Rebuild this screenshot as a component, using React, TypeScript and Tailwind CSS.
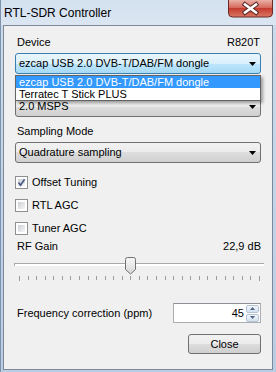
import React from "react";

const comboBg =
  "bg-[linear-gradient(to_bottom,#f2f2f2_0%,#ebebeb_50%,#dddddd_50%,#cfcfcf_100%)] border-[#707070]";
const comboFocusBg =
  "bg-[linear-gradient(to_bottom,#eaf6fd_0%,#d9f0fc_50%,#bee6fd_50%,#a7d9f5_100%)] border-[#3c7fb1]";

const Arrow = () => (
  <svg width="7" height="4" viewBox="0 0 7 4" className="shrink-0">
    <polygon points="0,0 7,0 3.5,4" fill="#000" />
  </svg>
);

const Combo = ({ text, focused }: { text: string; focused?: boolean }) => (
  <div
    className={`h-[21px] flex items-center justify-between border rounded-[3px] pl-[3px] pr-[4px] ${
      focused ? comboFocusBg : comboBg
    }`}
  >
    <span className="leading-[13px]">{text}</span>
    <Arrow />
  </div>
);

const CheckBox = ({ label, checked }: { label: string; checked?: boolean }) => (
  <div className="flex items-center h-[13px] gap-[4px]">
    <div className="relative w-[13px] h-[13px] border border-[#8e8f8f] bg-white p-[2px]">
      <div className="w-full h-full bg-linear-to-br from-[#cbcfd5] to-[#f7f7f7]" />
      {checked && (
        <svg width="11" height="11" viewBox="0 0 11 11" className="absolute left-0 top-0">
          <path d="M2.5 5.5 L4.5 8.2 L8.6 2.2" fill="none" stroke="#4a5c86" strokeWidth="1.7" />
        </svg>
      )}
    </div>
    <span className="leading-[13px]">{label}</span>
  </div>
);

const SpinArrow = ({ up }: { up?: boolean }) => (
  <div className="h-[8px] w-full flex items-center justify-center border border-[#b6c3d3] rounded-[2px] bg-linear-to-b from-[#f3f8fc] to-[#d3e2f0]">
    <svg width="5" height="3" viewBox="0 0 5 3">
      <polygon points={up ? "0,3 5,3 2.5,0" : "0,0 5,0 2.5,3"} fill="#4d6185" />
    </svg>
  </div>
);

export default function App() {
  const ticks = Array.from({ length: 29 });
  return (
    <div className="w-[276px] h-[372px] flex flex-col bg-linear-to-b from-[#cddcec] to-[#b9cde3] border-l border-[#7d93ad] font-['Liberation_Sans',Arial,sans-serif] text-[11px] text-black overflow-hidden">
      {/* title bar */}
      <div className="h-[25px] flex items-start shrink-0 bg-linear-to-b from-[#d3e0ee] to-[#dbe6f2]">
        <span className="mt-[6px] ml-[3px] text-[12px] leading-[14px]">RTL-SDR Controller</span>
        <svg width="45" height="18" viewBox="0 0 45 18" className="ml-auto mr-[3px]">
          <defs>
            <linearGradient id="closeg" x1="0" y1="0" x2="0" y2="1">
              <stop offset="0" stopColor="#eab0a6" />
              <stop offset="0.45" stopColor="#d7695d" />
              <stop offset="0.5" stopColor="#c43c2f" />
              <stop offset="1" stopColor="#dc7a66" />
            </linearGradient>
          </defs>
          <path
            d="M0.5 0 V13 a4 4 0 0 0 4 4 H40.5 a4 4 0 0 0 4 -4 V0"
            fill="url(#closeg)"
            stroke="#6a2a24"
          />
          <path d="M17 4.5 L28 12.5 M28 4.5 L17 12.5" stroke="#5a2a26" strokeWidth="4.6" strokeLinecap="square" />
          <path d="M17 4.5 L28 12.5 M28 4.5 L17 12.5" stroke="#ffffff" strokeWidth="2.6" strokeLinecap="square" />
        </svg>
      </div>

      {/* client area */}
      <div className="ml-[2px] mr-[3px] h-[345px] shrink-0 border border-[#7b8899] bg-[#f0f0f0] px-[11px] pt-[10px] flex flex-col">
        <div className="flex justify-between h-[13px] leading-[13px] pl-[2px] pr-[1px]">
          <span>Device</span>
          <span>R820T</span>
        </div>

        <div className="relative mt-[4px]">
          <Combo text="ezcap USB 2.0 DVB-T/DAB/FM dongle" focused />
          <div className="absolute left-0 right-0 top-[22px] z-10 border border-[#646464] bg-white shadow-[2px_2px_3px_rgba(0,0,0,0.35)]">
            <div className="h-[12px] leading-[12px] pl-[3px] bg-[#3399ff] text-white">
              ezcap USB 2.0 DVB-T/DAB/FM dongle
            </div>
            <div className="h-[12px] leading-[12px] pl-[3px]">Terratec T Stick PLUS</div>
          </div>
        </div>

        <div className="mt-[22px]">
          <Combo text="2.0 MSPS" />
        </div>

        <div className="mt-[8px] h-[13px] leading-[13px] pl-[2px]">Sampling Mode</div>
        <div className="mt-[4px]">
          <Combo text="Quadrature sampling" />
        </div>

        <div className="mt-[13px]">
          <CheckBox label="Offset Tuning" checked />
        </div>
        <div className="mt-[10px]">
          <CheckBox label="RTL AGC" />
        </div>
        <div className="mt-[10px]">
          <CheckBox label="Tuner AGC" />
        </div>

        <div className="mt-[5px] flex justify-between h-[13px] leading-[13px] pl-[2px]">
          <span>RF Gain</span>
          <span>22,9 dB</span>
        </div>

        {/* slider */}
        <div className="relative mt-[2px] ml-[-1px] w-[250px] flex flex-col">
          <div className="mt-[8px] h-[3px] border-t border-l border-[#a9a9a9] bg-white" />
          <div className="mt-[10px] ml-[5px] w-[241px] flex justify-between items-start">
            {ticks.map((_, i) => (
              <span
                key={i}
                className={`w-px bg-[#9d9d9d] ${i === 0 || i === 28 ? "h-[5px]" : "h-[4px]"}`}
              />
            ))}
          </div>
          <svg width="11" height="18" viewBox="0 0 11 18" className="absolute left-[111px] top-[2px]">
            <defs>
              <linearGradient id="thumbg" x1="0" y1="0" x2="0" y2="1">
                <stop offset="0" stopColor="#f6f6f6" />
                <stop offset="0.5" stopColor="#e8e8e8" />
                <stop offset="1" stopColor="#d4d4d4" />
              </linearGradient>
            </defs>
            <path
              d="M0.5 2.5 Q0.5 0.5 2.5 0.5 H8.5 Q10.5 0.5 10.5 2.5 V12.5 L5.5 17 L0.5 12.5 Z"
              fill="url(#thumbg)"
              stroke="#707070"
            />
          </svg>
        </div>

        <div className="mt-[22px] flex items-center justify-between h-[20px]">
          <span className="pl-[2px] leading-[13px]">Frequency correction (ppm)</span>
          <div className="w-[88px] h-[20px] border border-[#abadb3] border-t-[#8e9198] bg-white flex items-center justify-end pr-[1px]">
            <span className="leading-[13px] mr-[2px]">45</span>
            <div className="w-[13px] flex flex-col gap-px">
              <SpinArrow up />
              <SpinArrow />
            </div>
          </div>
        </div>

        <div className="mt-[11px] flex justify-end">
          <button className={`w-[73px] h-[20px] border rounded-[3px] leading-[13px] ${comboBg}`}>
            Close
          </button>
        </div>
      </div>
    </div>
  );
}
